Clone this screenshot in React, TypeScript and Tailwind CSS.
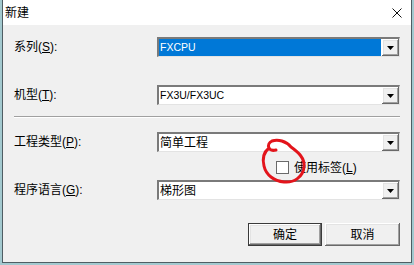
import React from "react";

const font = { fontFamily: '"Liberation Sans", "Noto Sans CJK SC", sans-serif' };

function Arrow() {
  return (
    <div className="w-[17px] h-full bg-[#f0f0f0] flex items-center justify-center shadow-[inset_-1px_-1px_0_#696969,inset_1px_1px_0_#ffffff,inset_-2px_-2px_0_#a0a0a0,inset_2px_2px_0_#e3e3e3]">
      <svg width="7" height="4" viewBox="0 0 7 4">
        <path d="M0 0 H7 L3.5 4 Z" fill="#000" />
      </svg>
    </div>
  );
}

function Combo({ value, selected, latin }: { value: string; selected?: boolean; latin?: boolean }) {
  return (
    <div className="flex-1 h-[20px] flex border-t-2 border-l-2 border-t-[#7a7a7a] border-l-[#7a7a7a] border-b border-r border-b-[#e3e3e3] border-r-[#e3e3e3] bg-white">
      <div
        className={
          "flex-1 flex items-center pl-[1px] mr-[1px] " +
          (selected ? "bg-[#0078d7] text-white" : "text-black") +
          (latin ? " text-[10.5px]" : " text-[12px]")
        }
      >
        {value}
      </div>
      <Arrow />
    </div>
  );
}

function Row({ label, u, rest, children }: { label: string; u: string; rest?: string; children: React.ReactNode }) {
  return (
    <div className="flex items-center h-[20px]">
      <div className="w-[143px] text-[12px] text-black leading-none">
        {label}(<span className="underline">{u}</span>){rest ?? ":"}
      </div>
      {children}
    </div>
  );
}

export default function App() {
  return (
    <div className="relative w-[414px] h-[265px] bg-[#a3c9cf] overflow-hidden" style={font}>
      <div className="ml-[2px] w-[410px] h-[263px] border-x border-b border-[#4f5d63] flex flex-col">
        <div className="h-[25px] bg-white flex items-center justify-between pl-[2px] pr-[9px]">
          <span className="text-[12px] text-black">新建</span>
          <svg width="10" height="10" viewBox="0 0 10 10">
            <path d="M0.5 0.5 L9.5 9.5 M9.5 0.5 L0.5 9.5" stroke="#111" strokeWidth="1" />
          </svg>
        </div>
        <div className="flex-1 bg-[#f0f0f0] px-[11px] flex flex-col">
          <div className="mt-[12px]">
            <Row label="系列" u="S">
              <Combo value="FXCPU" selected latin />
            </Row>
          </div>
          <div className="mt-[28px]">
            <Row label="机型" u="T">
              <Combo value="FX3U/FX3UC" latin />
            </Row>
          </div>
          <div className="mt-[11px] h-[2px] border-t border-t-[#a0a0a0] border-b border-b-[#ffffff]" />
          <div className="mt-[14px]">
            <Row label="工程类型" u="P">
              <Combo value="简单工程" />
            </Row>
          </div>
          <div className="mt-[9px] h-[13px] flex items-center pl-[262px]">
            <div className="w-[13px] h-[13px] border border-[#6a6a6a] bg-white" />
            <span className="ml-[5px] text-[12px] text-black leading-none">
              使用标签(<span className="underline">L</span>)
            </span>
          </div>
          <div className="mt-[6px]">
            <Row label="程序语言" u="G">
              <Combo value="梯形图" />
            </Row>
          </div>
          <div className="mt-[23px] flex justify-end gap-[3px]">
            <button className="w-[74px] h-[23px] bg-[#f0f0f0] text-[12px] text-black border border-[#3a3a3a] shadow-[inset_-1px_-1px_0_#696969,inset_1px_1px_0_#ffffff,inset_-2px_-2px_0_#a0a0a0,inset_2px_2px_0_#e3e3e3] flex items-center justify-center">
              确定
            </button>
            <button className="w-[75px] h-[23px] bg-[#f0f0f0] text-[12px] text-black shadow-[inset_-1px_-1px_0_#696969,inset_1px_1px_0_#ffffff,inset_-2px_-2px_0_#a0a0a0,inset_2px_2px_0_#e3e3e3] flex items-center justify-center">
              取消
            </button>
          </div>
        </div>
      </div>
      <svg className="absolute left-0 top-0 pointer-events-none" width="414" height="265" viewBox="0 0 414 265">
        <path
          d="M276 150 C268 152 266 144 272 141 C278 139 286 141 291 147 C298 152 305 158 304 167 C303 177 294 183 284 182 C274 181 266 175 264 166 C262 158 264 152 269 148"
          fill="none"
          stroke="#e3141b"
          strokeWidth="3"
          strokeLinecap="round"
        />
      </svg>
    </div>
  );
}
